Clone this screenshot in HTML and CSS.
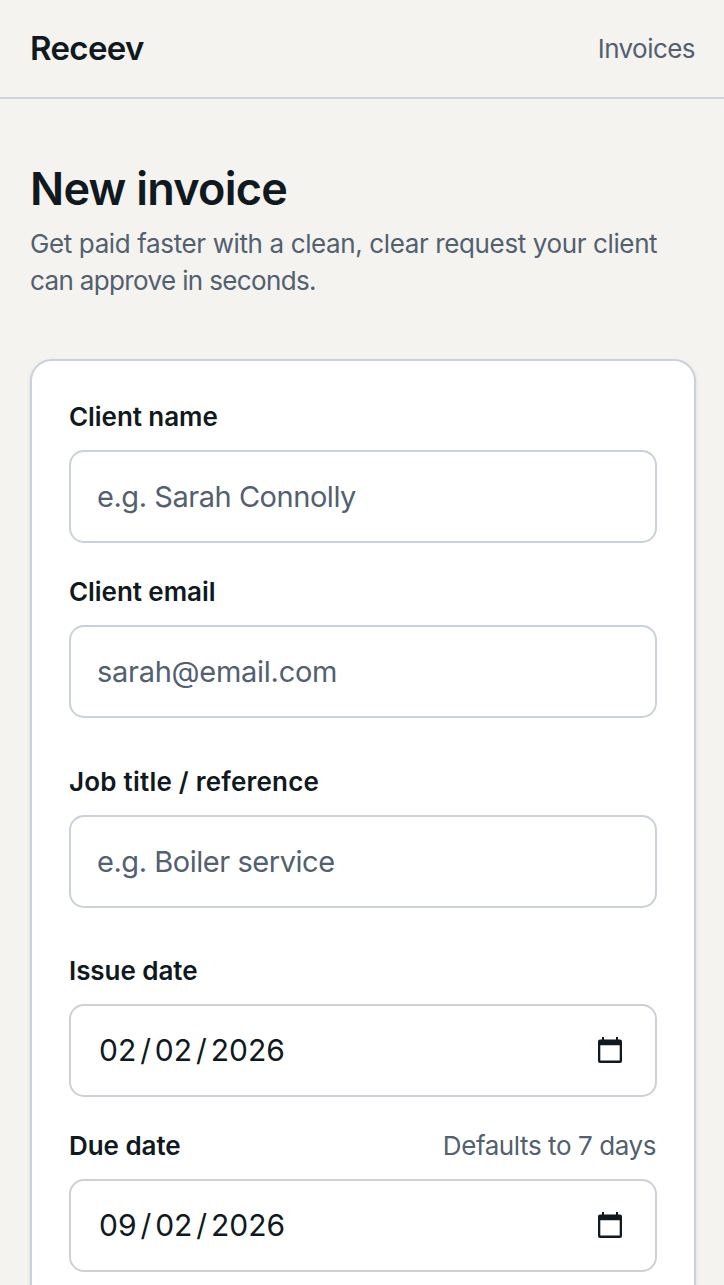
FILE: index.html
```html
<!DOCTYPE html>
<html lang="en">
<head>
    <meta charset="UTF-8">
    <meta name="viewport" content="width=device-width, initial-scale=1.0">
    <title>New invoice - Receev</title>
    <link rel="stylesheet" href="styles.css">
</head>
<body>
    <header class="topbar">
        <a class="logo">Receev</a>
        <nav><a class="nav-link">Invoices</a></nav>
    </header>
    <main class="container">
        <h1>New invoice</h1>
        <p class="intro"><span class="line1">Get paid faster with a clean, clear request your client</span><br><span class="line2">can approve in seconds.</span></p>

        <form class="card">
            <!-- client -->
            <div class="group">
                <div class="field">
                    <div class="label-row"><label for="name">Client name</label></div>
                    <input type="text" id="name" placeholder="e.g. Sarah Connolly">
                </div>
                <div class="field">
                    <div class="label-row"><label for="email">Client email</label></div>
                    <input class="email" type="email" id="email" placeholder="sarah@email.com">
                </div>
            </div>
            <!-- job -->
            <div class="group">
                <div class="field">
                    <div class="label-row"><label class="wide" for="job">Job title / reference</label></div>
                    <input type="text" id="job" placeholder="e.g. Boiler service">
                </div>
            </div>
            <!-- dates -->
            <div class="group dates">
                <div class="field">
                    <div class="label-row"><label>Issue date</label></div>
                    <div class="date">
                        <div class="value"><span>02</span><i>/</i><span>02</span><i>/</i><span>2026</span></div>
                        <svg class="calendar" viewBox="0 0 24 26"><path fill-rule="evenodd" d="M4 0h2v2.500h12V0h2v2.500h2a2 2 0 0 1 2 2V24a2 2 0 0 1-2 2H2a2 2 0 0 1-2-2V4.500a2 2 0 0 1 2-2h2zM2.300 8.200v15.400h19.400V8.200z"/></svg>
                    </div>
                </div>
                <div class="field">
                    <div class="label-row"><label>Due date</label><span class="hint">Defaults to 7 days</span></div>
                    <div class="date">
                        <div class="value"><span>09</span><i>/</i><span>02</span><i>/</i><span>2026</span></div>
                        <svg class="calendar" viewBox="0 0 24 26"><path fill-rule="evenodd" d="M4 0h2v2.500h12V0h2v2.500h2a2 2 0 0 1 2 2V24a2 2 0 0 1-2 2H2a2 2 0 0 1-2-2V4.500a2 2 0 0 1 2-2h2zM2.300 8.200v15.400h19.400V8.200z"/></svg>
                    </div>
                </div>
            </div>
        </form>
    </main>
</body>
</html>
```
FILE: styles.css
```css
*,::after,::before{margin: 0; box-sizing: border-box;}
body{height: 1285px; overflow: hidden; font-family: Inter, "Liberation Sans", sans-serif; font-size: 26px; color: #101820; background: #f4f3ef;}
.topbar{height: 99px; padding: 0 29px 0 30px; display: flex; align-items: center; justify-content: space-between; border-bottom: 2px solid #cbd2da;}
.logo{padding-bottom: 2px; font-size: 33px; font-weight: 600; letter-spacing: -0.65px;}
.nav-link{font-size: 26px; color: #526070; letter-spacing: -0.55px;}
.container{padding: 64px 28px 0 30px;}
h1{font-size: 45px; font-weight: 600; line-height: 52px; letter-spacing: -0.75px;}
.intro{margin-top: 10px; line-height: 37px; color: #526070; white-space: nowrap;}
.line1{letter-spacing: -0.38px;}
.line2{letter-spacing: -0.64px;}
.card{margin-top: 60px; padding: 37px 37px 60px; background: #fff; border: 2px solid #c9d1dc; border-radius: 22px; box-shadow: 0 2px 4px #1018201a; display: flex; flex-direction: column; gap: 45px;}
.group{display: flex; flex-direction: column; gap: 30px;}
.dates{margin-top: -1px;}
.label-row{height: 37px; margin-bottom: 15px; display: flex; align-items: center; justify-content: space-between; white-space: nowrap;}
label{font-weight: 600; letter-spacing: -0.06px;}
.wide{letter-spacing: 0.22px;}
.hint{margin-right: 1px; color: #526070; letter-spacing: -0.42px;}
input, .date{display: block; width: 100%; height: 93px; padding: 0 26px; font: 29px Inter, "Liberation Sans", sans-serif; background: #fff; border: 2px solid #c9d1dc; border-radius: 15px; outline: none;}
input::placeholder{color: #526070; opacity: 1; letter-spacing: -0.46px;}
.email::placeholder{letter-spacing: -0.27px;}
.date{display: flex; align-items: center; justify-content: space-between; padding: 0 33px 1px 28px; border-color: #ccd1d8;}
.value{display: flex; font-size: 30px;}
.value i{font-style: normal; padding: 0 3.900px;}
.calendar{width: 24px; height: 26px; fill: #101820;}
```
